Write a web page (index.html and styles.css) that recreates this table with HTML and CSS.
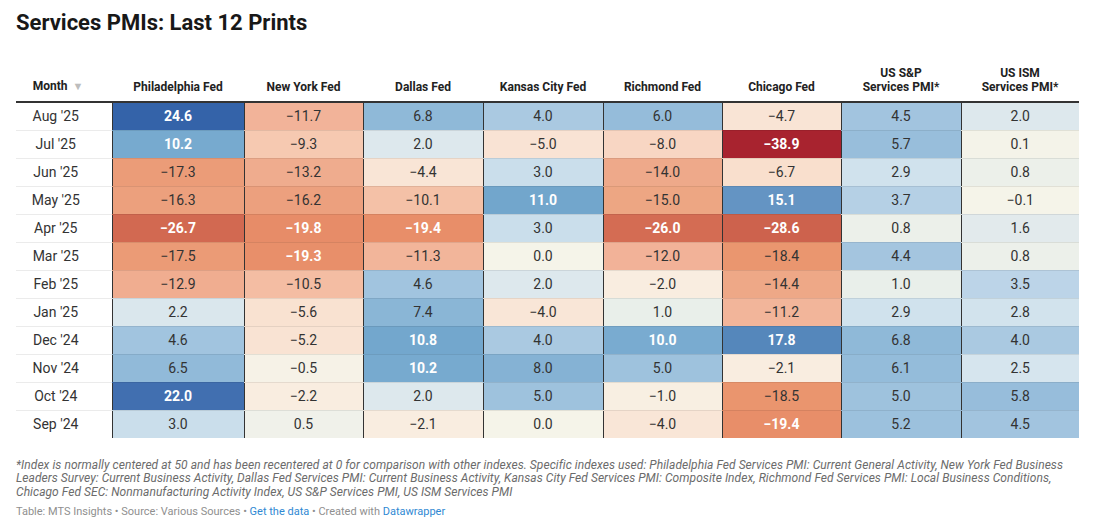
FILE: index.html
```html
<!DOCTYPE html>
<html lang="en">
<head>
<meta charset="utf-8">
<title>Services PMIs: Last 12 Prints</title>
<link rel="stylesheet" href="styles.css">
</head>
<body>
<div class="chart">
  <h1 class="title">Services PMIs: Last 12 Prints</h1>
  <table class="pmi">
    <colgroup>
      <col class="c-month"><col class="c-phil"><col class="c-119"><col class="c-120"><col class="c-120"><col class="c-119"><col class="c-119"><col class="c-120"><col class="c-118">
    </colgroup>
    <thead>
      <tr>
        <th class="month">Month <span class="sort">▼</span></th>
        <th>Philadelphia Fed</th>
        <th>New York Fed</th>
        <th>Dallas Fed</th>
        <th>Kansas City Fed</th>
        <th>Richmond Fed</th>
        <th>Chicago Fed</th>
        <th>US S&amp;P<br>Services PMI*</th>
        <th>US ISM<br>Services PMI*</th>
      </tr>
    </thead>
    <tbody>
      <tr><td class="month">Aug '25</td><td class="v">24.6</td><td class="v">−11.7</td><td class="v">6.8</td><td class="v">4.0</td><td class="v">6.0</td><td class="v">−4.7</td><td class="v">4.5</td><td class="v">2.0</td></tr>
      <tr><td class="month">Jul '25</td><td class="v">10.2</td><td class="v">−9.3</td><td class="v">2.0</td><td class="v">−5.0</td><td class="v">−8.0</td><td class="v">−38.9</td><td class="v">5.7</td><td class="v">0.1</td></tr>
      <tr><td class="month">Jun '25</td><td class="v">−17.3</td><td class="v">−13.2</td><td class="v">−4.4</td><td class="v">3.0</td><td class="v">−14.0</td><td class="v">−6.7</td><td class="v">2.9</td><td class="v">0.8</td></tr>
      <tr><td class="month">May '25</td><td class="v">−16.3</td><td class="v">−16.2</td><td class="v">−10.1</td><td class="v">11.0</td><td class="v">−15.0</td><td class="v">15.1</td><td class="v">3.7</td><td class="v">−0.1</td></tr>
      <tr><td class="month">Apr '25</td><td class="v">−26.7</td><td class="v">−19.8</td><td class="v">−19.4</td><td class="v">3.0</td><td class="v">−26.0</td><td class="v">−28.6</td><td class="v">0.8</td><td class="v">1.6</td></tr>
      <tr><td class="month">Mar '25</td><td class="v">−17.5</td><td class="v">−19.3</td><td class="v">−11.3</td><td class="v">0.0</td><td class="v">−12.0</td><td class="v">−18.4</td><td class="v">4.4</td><td class="v">0.8</td></tr>
      <tr><td class="month">Feb '25</td><td class="v">−12.9</td><td class="v">−10.5</td><td class="v">4.6</td><td class="v">2.0</td><td class="v">−2.0</td><td class="v">−14.4</td><td class="v">1.0</td><td class="v">3.5</td></tr>
      <tr><td class="month">Jan '25</td><td class="v">2.2</td><td class="v">−5.6</td><td class="v">7.4</td><td class="v">−4.0</td><td class="v">1.0</td><td class="v">−11.2</td><td class="v">2.9</td><td class="v">2.8</td></tr>
      <tr><td class="month">Dec '24</td><td class="v">4.6</td><td class="v">−5.2</td><td class="v">10.8</td><td class="v">4.0</td><td class="v">10.0</td><td class="v">17.8</td><td class="v">6.8</td><td class="v">4.0</td></tr>
      <tr><td class="month">Nov '24</td><td class="v">6.5</td><td class="v">−0.5</td><td class="v">10.2</td><td class="v">8.0</td><td class="v">5.0</td><td class="v">−2.1</td><td class="v">6.1</td><td class="v">2.5</td></tr>
      <tr><td class="month">Oct '24</td><td class="v">22.0</td><td class="v">−2.2</td><td class="v">2.0</td><td class="v">5.0</td><td class="v">−1.0</td><td class="v">−18.5</td><td class="v">5.0</td><td class="v">5.8</td></tr>
      <tr><td class="month">Sep '24</td><td class="v">3.0</td><td class="v">0.5</td><td class="v">−2.1</td><td class="v">0.0</td><td class="v">−4.0</td><td class="v">−19.4</td><td class="v">5.2</td><td class="v">4.5</td></tr>
    </tbody>
  </table>
  <p class="notes">*Index is normally centered at 50 and has been recentered at 0 for comparison with other indexes. Specific indexes used: Philadelphia Fed Services PMI: Current General Activity, New York Fed Business Leaders Survey: Current Business Activity, Dallas Fed Services PMI: Current Business Activity, Kansas City Fed Services PMI: Composite Index, Richmond Fed Services PMI: Local Business Conditions, Chicago Fed SEC: Nonmanufacturing Activity Index, US S&amp;P Services PMI, US ISM Services PMI</p>
  <p class="footer">Table: MTS Insights • Source: Various Sources • <a href="#">Get the data</a> • Created with <a href="#">Datawrapper</a></p>
</div>
<script src="script.js"></script>
</body>
</html>
```
FILE: styles.css
```css
body {
  margin: 0;
  background: #fff;
  font-family: Roboto, "Liberation Sans", Arial, sans-serif;
  color: #333;
}

.chart {
  padding: 10px 16px 0 16px;
}

.title {
  margin: 0;
  font-size: 22px;
  line-height: 26px;
  font-weight: 700;
  color: #181818;
}

.pmi {
  margin-top: 30px;
  width: 1063px;
  table-layout: fixed;
  border-collapse: collapse;
}

.c-month { width: 96px; }
.c-phil { width: 132px; }
.c-118 { width: 118px; }
.c-119 { width: 119px; }
.c-120 { width: 120px; }

.pmi th {
  font-size: 12px;
  line-height: 14.4px;
  font-weight: 700;
  color: #222;
  text-align: center;
  vertical-align: bottom;
  padding: 0 4px 6px;
  border-bottom: 2px solid #333;
}

.pmi th.month {
  padding-right: 16px;
}

.sort {
  color: #bdbdbd;
  font-size: 11px;
  margin-left: 2px;
}

.pmi td {
  height: 27px;
  padding: 0;
  font-size: 14px;
  text-align: center;
  color: #333;
  border-bottom: 1px solid rgba(0, 0, 0, 0.08);
}

.pmi td.month {
  padding-right: 16px;
  color: #333;
}

.pmi td.v {
  border-left: 1px solid #333;
}

.pmi td.v.light {
  color: #fff;
  font-weight: 700;
}

.pmi tbody tr:last-child td {
  border-bottom: none;
}

.notes {
  margin: 21px 0 0;
  width: 1064px;
  font-size: 12px;
  line-height: 13.5px;
  letter-spacing: 0.055px;
  font-style: italic;
  color: #6b6b6b;
}

.footer {
  margin: 6px 0 0;
  font-size: 11px;
  line-height: 14px;
  color: #8f8f8f;
}

.footer a {
  color: #2f89d3;
  text-decoration: none;
}
```
FILE: script.js
```js
(function () {
  var stops = [
    [-38.9, '#a8232f'], [-28.6, '#cd624d'], [-26.0, '#d46c53'], [-19.4, '#e88e69'],
    [-18.4, '#ea966f'], [-17.3, '#eb9c78'], [-16.2, '#eca07e'], [-15.0, '#eda683'],
    [-14.0, '#eea98a'], [-12.9, '#f0ad90'], [-12.0, '#f2b298'], [-11.2, '#f2b59a'],
    [-10.3, '#f4bfa5'], [-9.3, '#f6c9b1'], [-8.0, '#f8d6c3'], [-6.7, '#f9dfcd'],
    [-5.2, '#f9e3d3'], [-4.3, '#f9e5d6'], [-2.1, '#f9ede0'], [-1.0, '#f8efe2'],
    [-0.5, '#f6f2e7'], [0.0, '#f5f4e9'], [0.5, '#f0f1ea'], [1.0, '#e9efea'],
    [1.6, '#e2eaec'], [2.0, '#dde8ed'], [2.5, '#d6e5ee'], [2.9, '#d0e2ed'],
    [3.0, '#cadeeb'], [3.5, '#bcd4e8'], [3.7, '#b5d0e5'], [4.0, '#aac9e1'],
    [4.5, '#a2c4df'], [5.0, '#9ec2dd'], [5.8, '#97bddb'], [6.1, '#94bcda'],
    [6.8, '#8fb9d8'], [7.4, '#8ab6d6'], [8.0, '#85b2d4'], [10.0, '#79abd0'],
    [10.2, '#77aacf'], [11.0, '#72a6cc'], [15.1, '#6494c3'], [17.8, '#5587bb'],
    [22.0, '#416fb0'], [24.6, '#3463a9']
  ];
  function hex(h) {
    return [parseInt(h.substr(1, 2), 16), parseInt(h.substr(3, 2), 16), parseInt(h.substr(5, 2), 16)];
  }
  function color(v) {
    if (v <= stops[0][0]) return stops[0][1];
    for (var i = 1; i < stops.length; i++) {
      if (v <= stops[i][0]) {
        var a = stops[i - 1], b = stops[i];
        var t = (v - a[0]) / (b[0] - a[0]);
        var ca = hex(a[1]), cb = hex(b[1]);
        var r = [];
        for (var k = 0; k < 3; k++) r.push(Math.round(ca[k] + (cb[k] - ca[k]) * t));
        return 'rgb(' + r.join(',') + ')';
      }
    }
    return stops[stops.length - 1][1];
  }
  var cells = document.querySelectorAll('td.v');
  for (var i = 0; i < cells.length; i++) {
    var v = parseFloat(cells[i].textContent.replace('\u2212', '-'));
    cells[i].style.background = color(v);
    if (v >= 10 || v <= -19) cells[i].classList.add('light');
  }
})();
```
